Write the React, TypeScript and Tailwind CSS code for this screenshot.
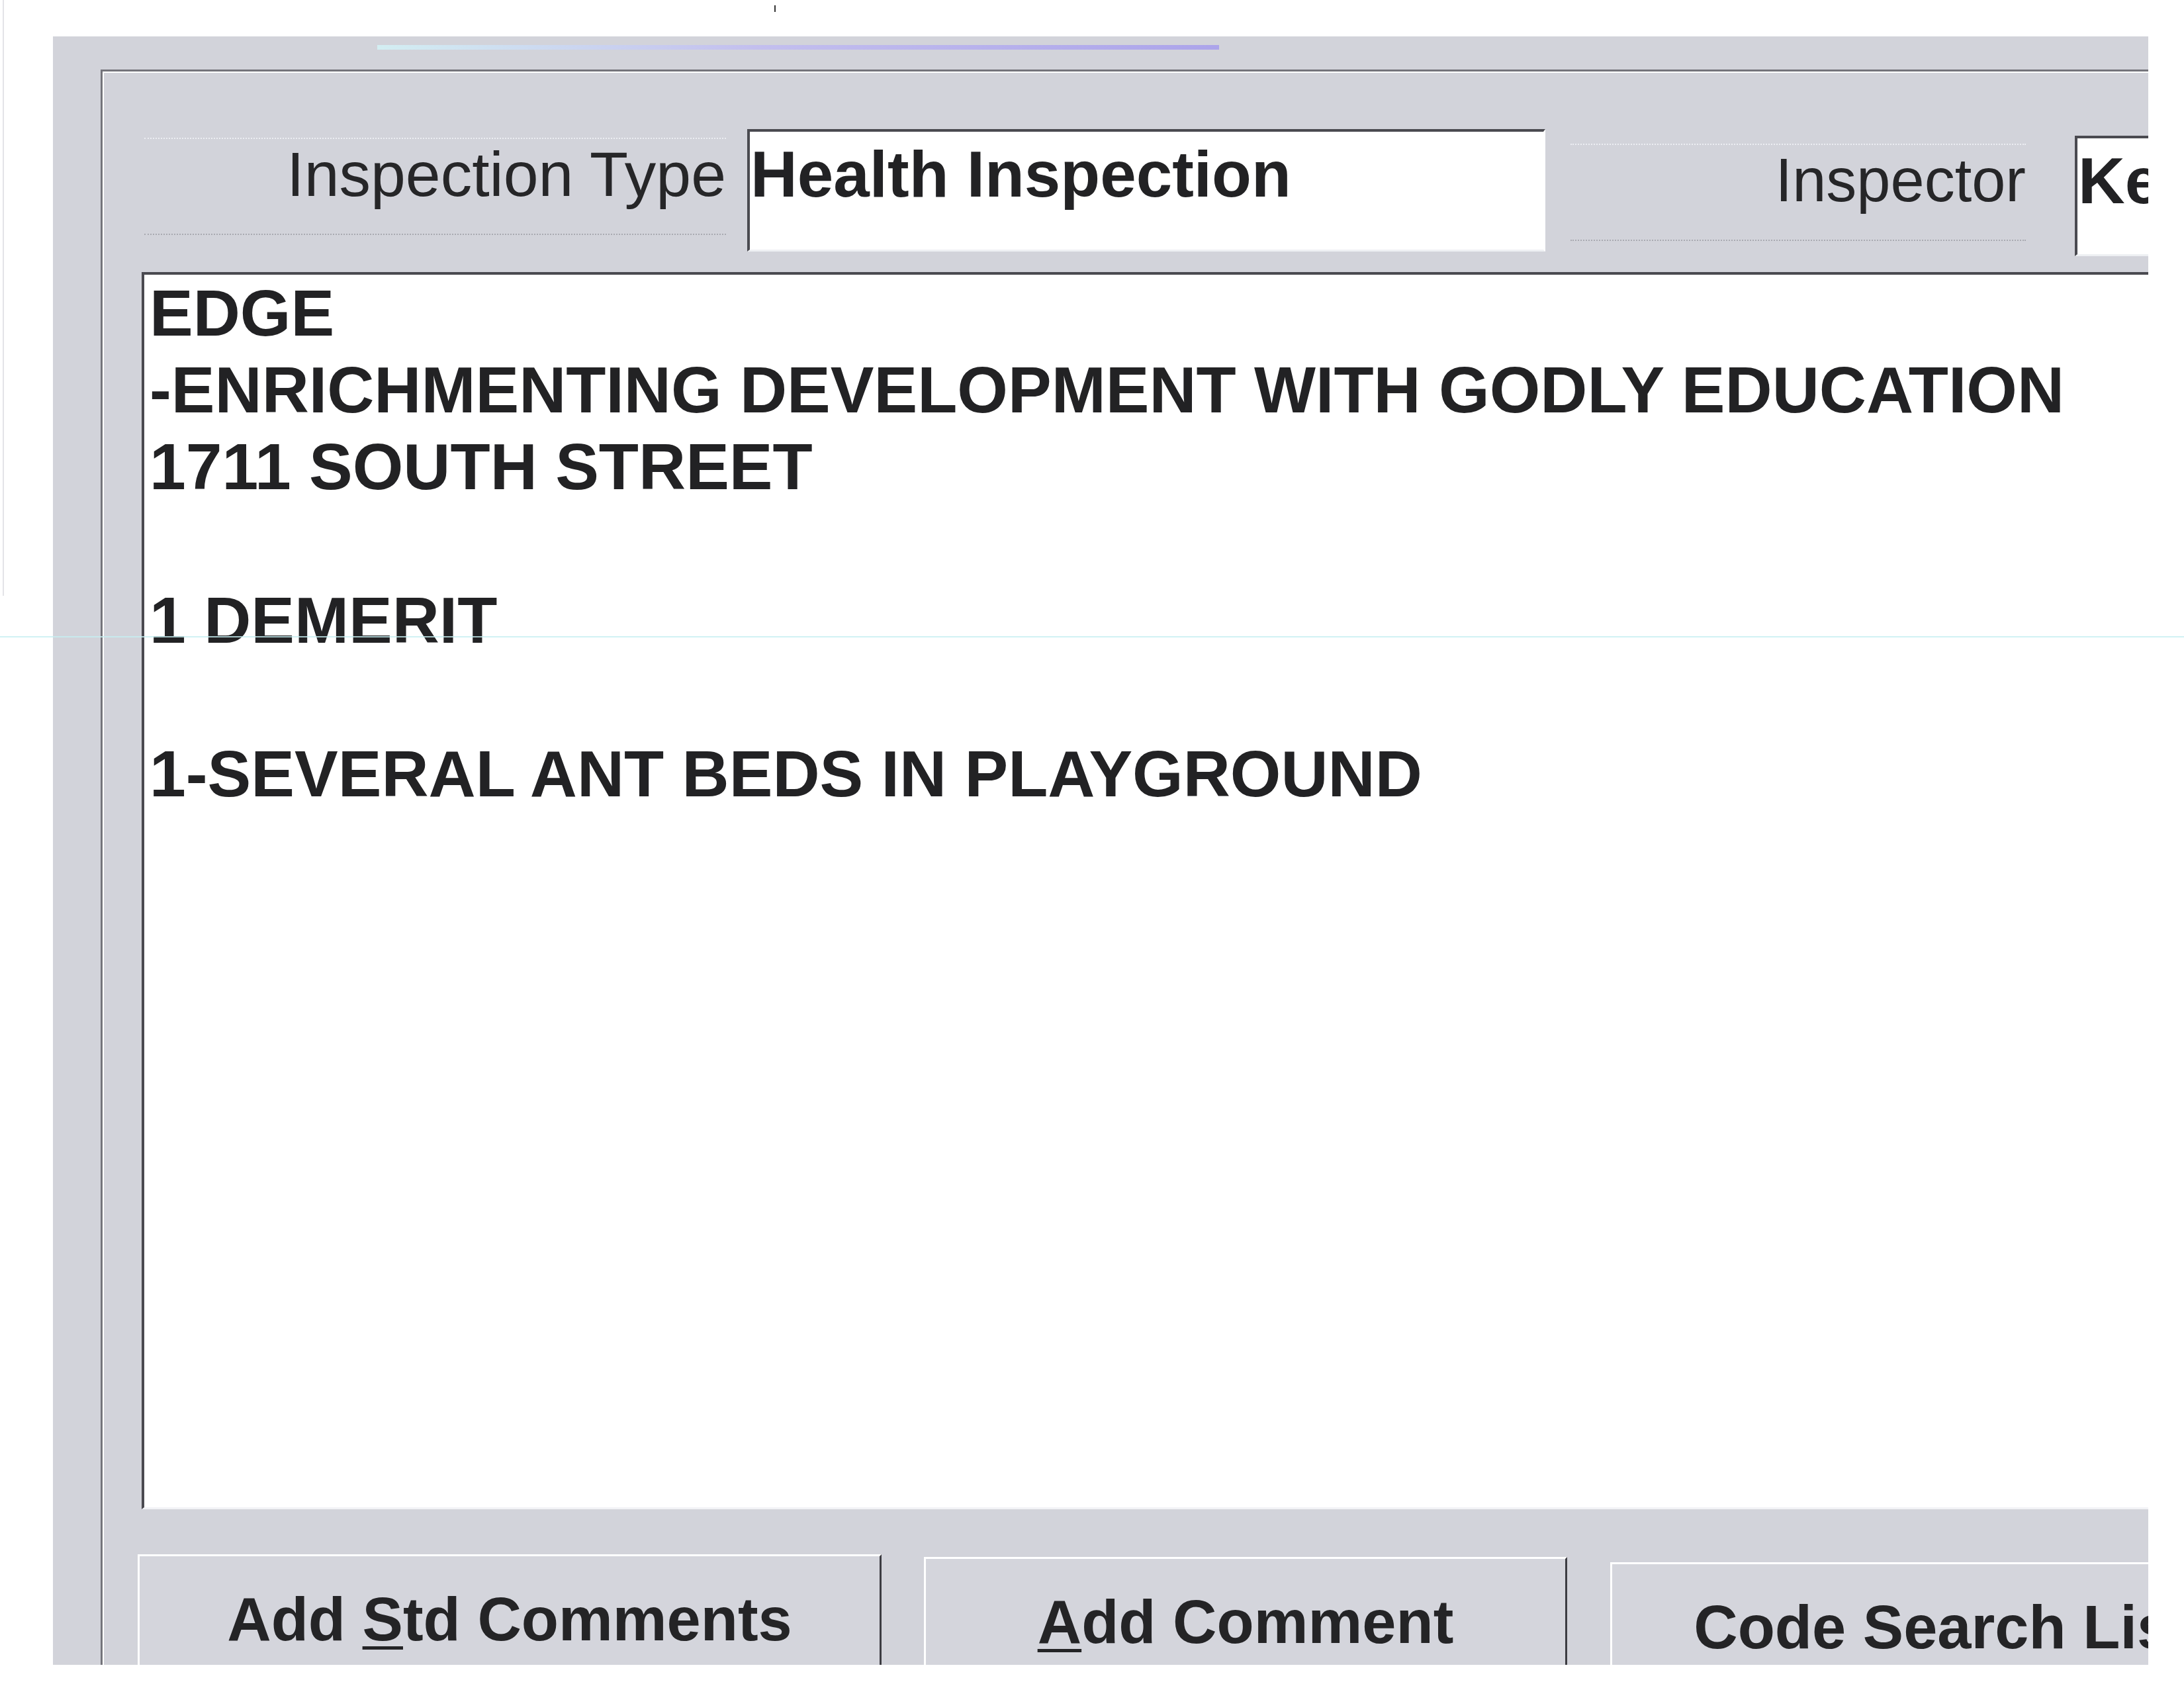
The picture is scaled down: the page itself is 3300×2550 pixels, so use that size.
import React from "react";

const FONT = { fontFamily: '"Liberation Sans", Arial, sans-serif' };

function LabelBox({ text, className }: { text: string; className: string }) {
  return (
    <div
      className={`h-[147px] shrink-0 border-t-2 border-b-2 border-dotted border-t-[#eceef2] border-b-[#a9aab1] leading-[106px] text-right text-[#262628] whitespace-nowrap ${className}`}
    >
      {text}
    </div>
  );
}

function Field({ value, className }: { value: string; className: string }) {
  return (
    <div
      className={`shrink-0 overflow-hidden bg-white border-t-4 border-l-4 border-t-[#4a4a50] border-l-[#4a4a50] border-b-[3px] border-b-[#eef0f3] border-r-[3px] border-r-white pt-[8px] pl-[1px] text-[98px] font-bold leading-[113px] text-[#222224] whitespace-nowrap ${className}`}
    >
      {value}
    </div>
  );
}

function Button({ children, className }: { children: React.ReactNode; className: string }) {
  return (
    <div
      className={`shrink-0 h-[220px] bg-[#d4d5dc] border-t-[3px] border-l-[3px] border-t-white border-l-white border-r-[3px] border-r-[#3c3c42] pt-[42px] text-center text-[92px] font-bold leading-[106px] text-[#242426] whitespace-nowrap overflow-hidden ${className}`}
    >
      {children}
    </div>
  );
}

export default function App() {
  const lines = [
    "EDGE",
    "-ENRICHMENTING DEVELOPMENT WITH GODLY EDUCATION",
    "1711 SOUTH STREET",
    "",
    "1 DEMERIT",
    "",
    "1-SEVERAL ANT BEDS IN PLAYGROUND",
  ];
  return (
    <div className="relative w-[3300px] h-[2550px] bg-white overflow-hidden" style={FONT}>
      <div className="pt-[55px] pl-[80px]">
        <div className="w-[3166px] h-[2460px] bg-[#d2d3da] overflow-hidden flex flex-col">
          {/* title accent strip */}
          <div className="mt-[13px] ml-[490px] w-[1272px] h-[7px] shrink-0 bg-linear-to-r from-[#d3eef2] from-0% via-[#c3bfee] via-45% to-[#aca4ea] to-100%" />
          {/* group frame */}
          <div className="mt-[30px] ml-[72px] w-[3200px] flex-1 border-t-[3px] border-l-[3px] border-[#74747b]">
            <div className="h-full border-t-2 border-l-2 border-white flex flex-col">
              <div className="mt-[85px] h-[185px] shrink-0 flex items-start">
                <LabelBox text="Inspection Type" className="ml-[61px] w-[879px] mt-[13px] text-[95px]" />
                <Field value="Health Inspection" className="ml-[32px] w-[1206px] h-[185px]" />
                <LabelBox text="Inspector" className="ml-[38px] w-[688px] mt-[22px] text-[92px]" />
                <Field value="Kevin" className="ml-[74px] w-[500px] h-[182px] mt-[10px]" />
              </div>
              <div className="mt-[31px] ml-[57px] w-[3100px] h-[1869px] shrink-0 bg-white border-t-4 border-l-4 border-t-[#4a4a50] border-l-[#4a4a50] border-b-[3px] border-b-[#f2f3f6] pl-[8px] text-[98.5px] font-bold leading-[116px] text-[#222224] overflow-hidden">
                {lines.map((l, i) => (
                  <div key={i} className="h-[116px] whitespace-pre">
                    {l}
                  </div>
                ))}
              </div>
              <div className="mt-[68px] ml-[51px] flex items-start">
                <Button className="w-[1124px]">
                  Add <span className="underline decoration-[5px] underline-offset-[9px]">S</span>td Comments
                </Button>
                <Button className="ml-[64px] w-[972px] mt-[4px]">
                  <span className="underline decoration-[5px] underline-offset-[9px]">A</span>dd Comment
                </Button>
                <Button className="ml-[65px] w-[1004px] mt-[12px]">Code Search List</Button>
              </div>
            </div>
          </div>
        </div>
      </div>
      {/* scanner artifacts */}
      <div className="absolute left-0 top-[961px] w-[3300px] h-[2px] bg-[#c6eff1] opacity-80" />
      <div className="absolute left-[4px] top-0 w-[2px] h-[900px] bg-[#e3e4e8]" />
      <div className="absolute left-[1170px] top-[8px] w-[2px] h-[10px] bg-[#333]" />
    </div>
  );
}
